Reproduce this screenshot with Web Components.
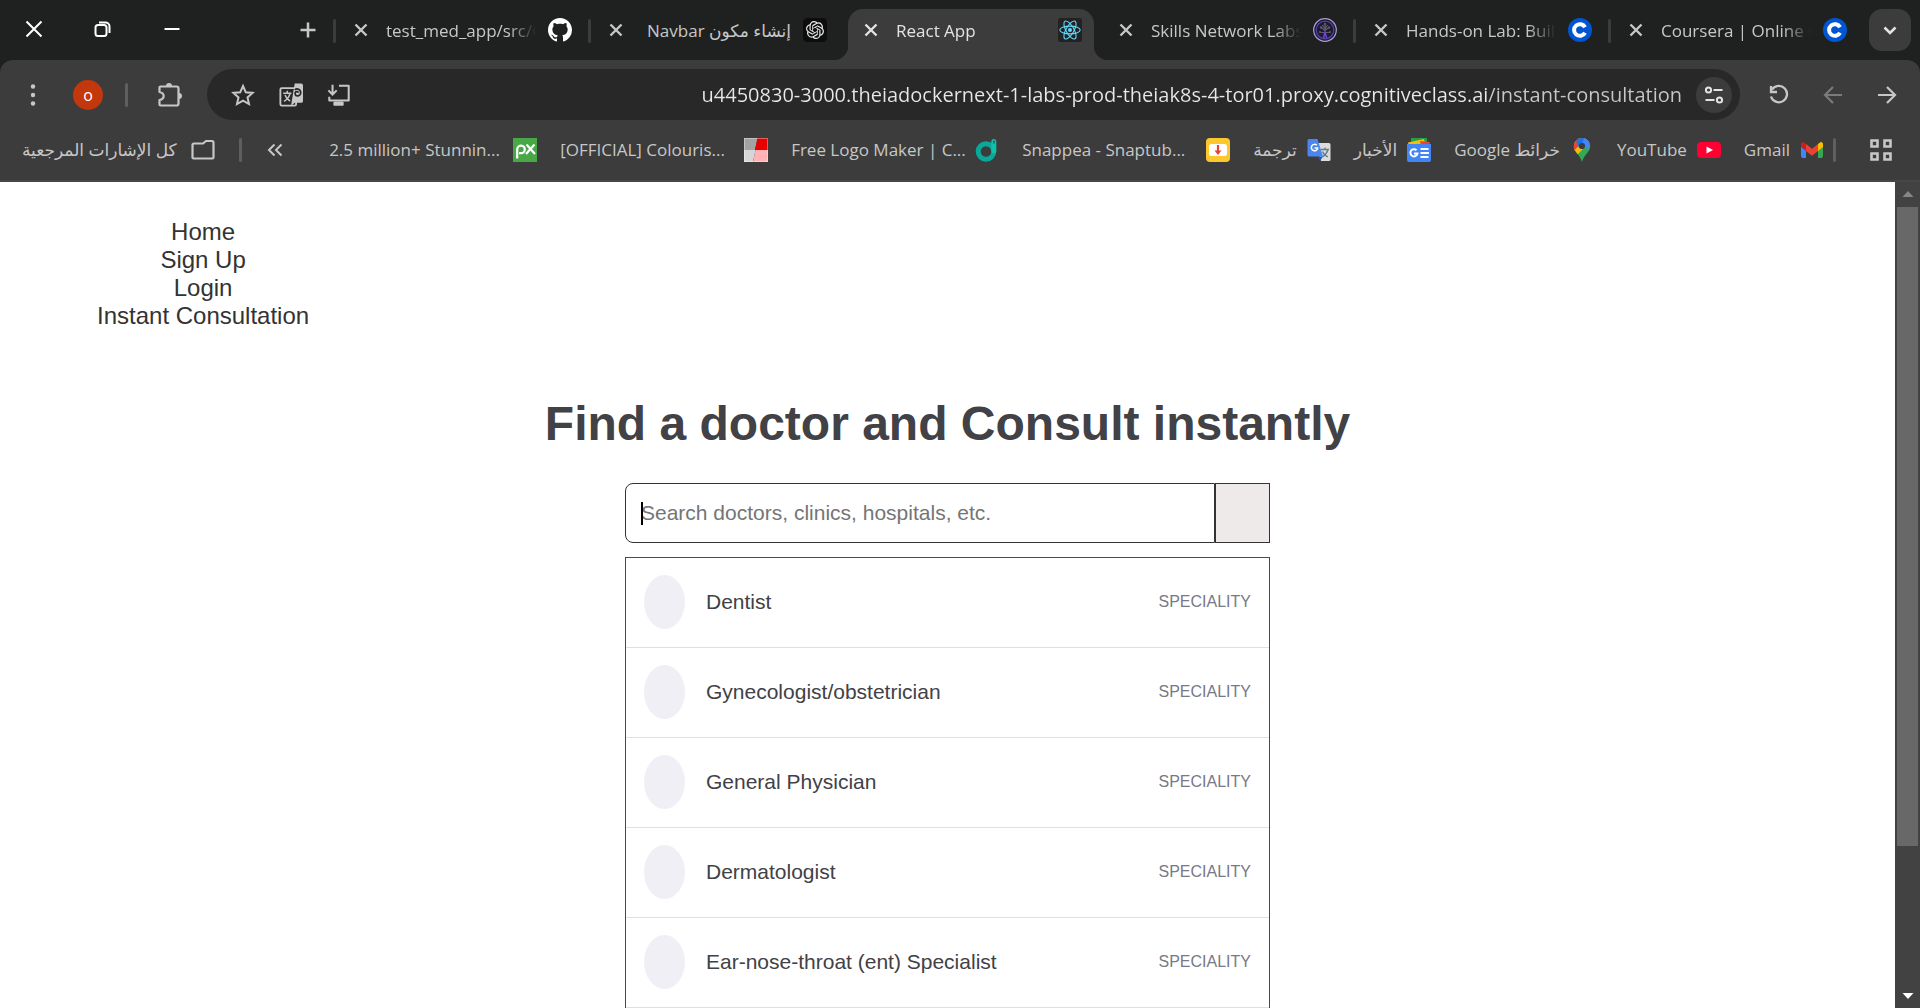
<!DOCTYPE html>
<html lang="en">
<head>
<meta charset="utf-8">
<title>React App</title>
<style>
  html, body { margin: 0; height: 100%; overflow: hidden; background: #fff; }
  body { font-family: "Liberation Sans", Arial, sans-serif; }
</style>
</head>
<body>
<browser-window></browser-window>

<script>
const UI_FONT = '"Open Sans", "Noto Sans", "DejaVu Sans", sans-serif';

const ICONS = {
  close: ['0 0 24 24', '<path d="M4.5 4.5l15 15M19.5 4.5l-15 15" stroke="#fff" stroke-width="2" fill="none"/>'],
  restore: ['0 0 24 24', '<rect x="4.5" y="8" width="11" height="11" rx="2.5" stroke="#fff" stroke-width="2" fill="none"/><path d="M8 5.500h6.500a4 4 0 0 1 4 4V16" stroke="#fff" stroke-width="2" fill="none"/>'],
  minimize: ['0 0 24 24', '<path d="M4.500 12h15" stroke="#fff" stroke-width="2"/>'],
  plus: ['0 0 24 24', '<path d="M4.500 12h15M12 4.500v15" stroke="#c7c7c7" stroke-width="2.5"/>'],
  tabclose: ['0 0 24 24', '<path d="M6.500 6.500l11 11M17.500 6.500l-11 11" stroke="currentColor" stroke-width="2.4"/>'],
  chevron: ['0 0 24 24', '<path d="M6.500 9.500l5.500 5.500 5.500-5.500" stroke="#e3e3e3" stroke-width="2.6" fill="none"/>'],
  github: ['0 0 16 16', '<path fill="#fff" d="M8 0C3.580 0 0 3.580 0 8c0 3.540 2.290 6.530 5.470 7.590.4.070.55-.17.55-.38 0-.19-.01-.82-.01-1.490-2.010.37-2.530-.49-2.690-.94-.09-.23-.48-.94-.82-1.130-.28-.15-.68-.52-.01-.53.63-.01 1.080.58 1.230.82.72 1.210 1.870.87 2.330.66.07-.52.28-.87.51-1.070-1.780-.2-3.640-.89-3.640-3.950 0-.87.31-1.590.82-2.150-.08-.2-.36-1.020.08-2.120 0 0 .67-.21 2.200.82.64-.18 1.320-.27 2-.27s1.360.09 2 .27c1.530-1.040 2.200-.82 2.200-.82.44 1.100.16 1.920.08 2.120.51.56.82 1.270.82 2.150 0 3.070-1.870 3.750-3.650 3.950.29.25.54.73.54 1.480 0 1.070-.01 1.930-.01 2.200 0 .21.15.46.55.38A8.010 8.010 0 0 0 16 8c0-4.420-3.580-8-8-8z"/>'],
  openai: ['0 0 24 24', '<rect width="24" height="24" rx="4.5" fill="#0d0d0d"/><g transform="translate(3 3) scale(.75)"><path fill="#e8e8e8" d="M22.2819 9.8211a5.9847 5.9847 0 0 0-.5157-4.9108 6.0462 6.0462 0 0 0-6.5098-2.9A6.0651 6.0651 0 0 0 4.9807 4.1818a5.9847 5.9847 0 0 0-3.9977 2.9 6.0462 6.0462 0 0 0 .7427 7.0966 5.98 5.98 0 0 0 .511 4.9107 6.051 6.051 0 0 0 6.5146 2.9001A5.9847 5.9847 0 0 0 13.2599 24a6.0557 6.0557 0 0 0 5.7718-4.2058 5.9894 5.9894 0 0 0 3.9977-2.9001 6.0557 6.0557 0 0 0-.7475-7.0729zm-9.022 12.6081a4.4755 4.4755 0 0 1-2.8764-1.0408l.1419-.0804 4.7783-2.7582a.7948.7948 0 0 0 .3927-.6813v-6.7369l2.02 1.1686a.071.071 0 0 1 .038.052v5.5826a4.504 4.504 0 0 1-4.4945 4.4944zm-9.6607-4.1254a4.4708 4.4708 0 0 1-.5346-3.0137l.142.0852 4.783 2.7582a.7712.7712 0 0 0 .7806 0l5.8428-3.3685v2.3324a.0804.0804 0 0 1-.0332.0615L9.74 19.9502a4.4992 4.4992 0 0 1-6.1408-1.6464zM2.3408 7.8956a4.485 4.485 0 0 1 2.3655-1.9728V11.6a.7664.7664 0 0 0 .3879.6765l5.8144 3.3543-2.0201 1.1685a.0757.0757 0 0 1-.071 0l-4.8303-2.7865A4.504 4.504 0 0 1 2.3408 7.872zm16.5963 3.8558L13.1038 8.364 15.1192 7.2a.0757.0757 0 0 1 .071 0l4.8303 2.7913a4.4944 4.4944 0 0 1-.6765 8.1042v-5.6772a.79.79 0 0 0-.407-.667zm2.0107-3.0231l-.142-.0852-4.7735-2.7818a.7759.7759 0 0 0-.7854 0L9.409 9.2297V6.8974a.0662.0662 0 0 1 .0284-.0615l4.8303-2.7866a4.4992 4.4992 0 0 1 6.6802 4.66zM8.3065 12.863l-2.02-1.1638a.0804.0804 0 0 1-.038-.0567V6.0742a4.4992 4.4992 0 0 1 7.3757-3.4537l-.142.0805L8.704 5.459a.7948.7948 0 0 0-.3927.6813zm1.0976-2.3654l2.602-1.4998 2.6069 1.4998v2.9994l-2.5974 1.4997-2.6067-1.4997Z"/></g>'],
  react: ['0 0 24 24', '<rect width="24" height="24" rx="2.5" fill="#222"/><g fill="none" stroke="#61dafb" stroke-width="1.1"><ellipse cx="12" cy="12" rx="10.2" ry="3.9"/><ellipse cx="12" cy="12" rx="10.2" ry="3.9" transform="rotate(60 12 12)"/><ellipse cx="12" cy="12" rx="10.2" ry="3.9" transform="rotate(120 12 12)"/></g><circle cx="12" cy="12" r="2" fill="#61dafb"/>'],
  skills: ['0 0 24 24', '<circle cx="12" cy="12" r="11.3" fill="#1d1b2c" stroke="#a99fd6" stroke-width="1.2"/><circle cx="12" cy="12" r="8.8" fill="none" stroke="#5b3fb0" stroke-width="1.2"/><g stroke="#5d5a70" stroke-width="1.2" fill="none"><path d="M12 6v9M12 12.500l-4-3M12 12.500l4-3M12 14.500l-5 0M12 14.500l5 0M9.500 7l2.500 4 2.500-4"/></g><path d="M10.500 20l1.500-6 1.500 6" stroke="#6d46d0" stroke-width="1.5" fill="none"/><g fill="#5d5a70"><circle cx="8" cy="9.5" r="1.2"/><circle cx="16" cy="9.5" r="1.2"/><circle cx="12" cy="6" r="1.2"/><circle cx="7" cy="14" r="1.1"/><circle cx="17" cy="14" r="1.1"/></g>'],
  coursera: ['0 0 24 24', '<circle cx="12" cy="12" r="12" fill="#0056d2"/><path d="M17 9.300A5.800 5.800 0 1 0 17 14.700" fill="none" stroke="#fff" stroke-width="4"/>'],
  kebab: ['0 0 24 24', '<g fill="#c7c7c7"><circle cx="12" cy="3.5" r="2.2"/><circle cx="12" cy="12" r="2.2"/><circle cx="12" cy="20.5" r="2.2"/></g>'],
  puzzle: ['0 0 24 24', '<path d="M2.500 3.500h16a2 2 0 0 1 2 2v15a2 2 0 0 1-2 2h-16a1 1 0 0 1-1-1v-4.500c5.500-1 5.500-7 0-8V4.500a1 1 0 0 1 1-1z" fill="none" stroke="#c7c7c7" stroke-width="2.2" stroke-linejoin="round"/><path d="M8 3a3 3 0 0 1 6 0zM21 10a3 3 0 0 1 0 6z" fill="#c7c7c7"/>'],
  star: ['0 0 24 24', '<path d="M12 3l2.800 6.300 6.800.6-5.100 4.500 1.500 6.700-6-3.500-6 3.500 1.500-6.700-5.100-4.500 6.800-.6z" fill="none" stroke="#c7c7c7" stroke-width="2"/>'],
  translate: ['0 0 26 26', '<rect x="1.5" y="5.5" width="17" height="19" rx="1.5" fill="none" stroke="#c7c7c7" stroke-width="2"/><path d="M4.500 11h9M9 8.500V11M12 11c-.8 4-3.500 7-6.500 9M6.500 13c1 3 3 5 5.500 6.500" fill="none" stroke="#c7c7c7" stroke-width="1.6"/><path d="M17 .5h7a2 2 0 0 1 2 2v17a2 2 0 0 1-2 2h-7L13 25z" fill="#c7c7c7"/><path d="M17 7.500C20 5 24 7.500 23.500 11S18 15 17.500 12s3-3.500 3.500-1.500" fill="none" stroke="#282828" stroke-width="1.8"/>'],
  install: ['0 0 26 26', '<path d="M13 3h10.500v16H2.500v-4M8 21.500h9v2H8z" fill="none" stroke="#c7c7c7" stroke-width="2.2" stroke-linejoin="round"/><path d="M6 2v10M1.500 8L6 12.500 10.500 8" fill="none" stroke="#c7c7c7" stroke-width="2.2"/>'],
  tune: ['0 0 24 24', '<g fill="none" stroke="#e3e3e3" stroke-width="2"><circle cx="6.5" cy="7" r="2.6"/><path d="M11.500 7h9M3.500 17h9"/><circle cx="17.5" cy="17" r="2.6"/></g>'],
  reload: ['0 0 24 24', '<path d="M5 6.500A8.200 8.200 0 1 1 4 13.500M4 3v6h6" fill="none" stroke="#c7c7c7" stroke-width="2.3"/>'],
  back: ['0 0 24 24', '<path d="M21 12H4.500M12 4l-8 8 8 8" fill="none" stroke="#7b7b7b" stroke-width="2.2"/>'],
  forward: ['0 0 24 24', '<path d="M3 12h16.500M12 4l8 8-8 8" fill="none" stroke="#c7c7c7" stroke-width="2.2"/>'],
  folder: ['0 0 24 24', '<path d="M1.500 19.500V7a1.500 1.500 0 0 1 1.500-1.500h9l3-2.500h6a1.500 1.500 0 0 1 1.500 1.500v15a1 1 0 0 1-1 1h-19a1 1 0 0 1-1-1z" fill="none" stroke="#c7c7c7" stroke-width="2.2" stroke-linejoin="round"/>'],
  more: ['0 0 24 24', '<path d="M11.500 6.500L6 12l5.500 5.500M18.500 6.500L13 12l5.500 5.500" fill="none" stroke="#c7c7c7" stroke-width="2"/>'],
  px: ['0 0 24 24', '<rect width="24" height="24" fill="#48a847"/><path d="M4.200 20.500V11a3.800 3.800 0 1 1 3.800 4.200H6M13.500 6.500l8.500 9.500M21.500 6.500l-8.500 9.500" fill="none" stroke="#fff" stroke-width="2.2"/>'],
  colour: ['0 0 24 24', '<path d="M0 0h13.500L11 12H0z" fill="#a3a3a3"/><path d="M13.500 0H24v12H11z" fill="#e60000"/><path d="M0 12h11.500L9 24H0z" fill="#d6d6d6"/><path d="M11.500 12H24v12H9z" fill="#ffb3b5"/><rect x=".5" y=".5" width="23" height="23" fill="none" stroke="#fff" stroke-opacity=".35"/>'],
  logomaker: ['0 0 24 24', '<circle cx="11" cy="13.5" r="7.8" fill="none" stroke="#0aa89a" stroke-width="5"/><path d="M18.800 13V3.500" stroke="#12bfa8" stroke-width="5" stroke-linecap="round"/><path d="M19 2.500v3" stroke="#2b5f5a" stroke-width="1.5"/>'],
  snappea: ['0 0 24 24', '<rect width="24" height="24" rx="4" fill="#fdc82f"/><rect x="3" y="6" width="18" height="12" rx="2.5" fill="#fff"/><path d="M12 7v7" stroke="#ea4335" stroke-width="2.2"/><path d="M8.500 12.500h7L12 17z" fill="#ea4335"/>'],
  gtranslate: ['0 0 24 24', '<path d="M9 5h13a1.500 1.500 0 0 1 1.500 1.500v15A1.500 1.500 0 0 1 22 23H14z" fill="#dcdcdc"/><path d="M14 11.500h8M18 9.500v2M21 11.500c-1 4-3.500 6-5.500 7.500M15.500 13.500c1 2.500 3 4.500 5.500 5.500" stroke="#607d8b" stroke-width="1.3" fill="none"/><path d="M11 18.500h5L13 23z" fill="#1f57c3"/><path d="M2 1h8.500l5.500 17.500H2A1.500 1.500 0 0 1 .5 17V2.500A1.500 1.500 0 0 1 2 1z" fill="#4a86ee"/><path d="M9.800 7.300a3.200 3.200 0 1 0 .9 2.700H7.500" stroke="#fff" stroke-width="1.5" fill="none"/>'],
  gnews: ['0 0 24 24', '<path d="M4 0h16v8H4z" fill="#24a148"/><path d="M1 4.500L17 1l2 8H2z" fill="#fbbc04"/><path d="M13 3l10 1-1 4h-8z" fill="#ea4335"/><path d="M0 6h24v16a2 2 0 0 1-2 2H2a2 2 0 0 1-2-2z" fill="#4285f4"/><path d="M9.500 12.200a3.600 3.600 0 1 0 1 3.300H7" stroke="#fff" stroke-width="2" fill="none"/><path d="M13.500 11h8M13.500 15h8.500M13.500 19h8" stroke="#fff" stroke-width="2"/>'],
  gmaps: ['0 0 24 24', '<clipPath id="pin"><path d="M12 0a8.200 8.200 0 0 1 8.200 8.200c0 6-6.200 8-8.200 15.800C10 16.200 3.800 14.200 3.800 8.200A8.200 8.200 0 0 1 12 0z"/></clipPath><g clip-path="url(#pin)"><path d="M0 0h24v24H0z" fill="#34a853"/><path d="M0 0h24L4 20H0z" fill="#fbbc04"/><path d="M0 0h16L3 14z" fill="#ea4335"/><path d="M6 2l5-4h10L9 10z" fill="#1a73e8"/><path d="M14 0h10v6l-8 5-4-4z" fill="#4285f4"/></g><circle cx="12" cy="8" r="3.1" fill="#3c3c3c"/>'],
  youtube: ['0 0 24 24', '<rect y="4" width="24" height="16" rx="4" fill="#ff0033"/><path d="M9.500 8.500l6.500 3.500-6.500 3.500z" fill="#fff"/>'],
  gmail: ['0 0 24 24', '<path d="M1 6h5v14H3a2 2 0 0 1-2-2z" fill="#4285f4"/><path d="M18 6h5v12a2 2 0 0 1-2 2h-3z" fill="#34a853"/><path d="M18 6l2-1.500c1.500-1 3 0 3 2V9l-5 4z" fill="#fbbc04"/><path d="M6 6L4 4.500C2.500 3.500 1 4.500 1 6.500V9l5 4z" fill="#c5221f"/><path d="M6 6l6 4.800L18 6v7l-6 4.700L6 13z" fill="#ea4335"/>'],
  apps: ['0 0 24 24', '<path d="M2.500 2.500h6v6h-6zM15.500 2.500h6v6h-6zM2.500 15.500h6v6h-6zM15.500 15.500h6v6h-6z" fill="none" stroke="#c7c7c7" stroke-width="2.6"/>'],
  up: ['0 0 24 24', '<path d="M6.500 15L12 9l5.500 6z" fill="#868686"/>'],
  down: ['0 0 24 24', '<path d="M6.500 9L12 15l5.500-6z" fill="#fff"/>']
};

const RESET = `
  *, *::before, *::after { box-sizing: border-box; }
  button { margin: 0; padding: 0; border: 0; background: none; font: inherit; color: inherit; display: flex; align-items: center; justify-content: center; flex: none; }
  a { color: inherit; text-decoration: none; }
`;

function define(name, markup, setup) {
  const template = document.createElement('template');
  template.innerHTML = markup;
  customElements.define(name, class extends HTMLElement {
    constructor() {
      super();
      this.attachShadow({ mode: 'open' }).append(template.content.cloneNode(true));
    }
    connectedCallback() {
      if (setup) setup(this, this.shadowRoot);
    }
  });
}

define('ui-icon', `
  <style>
    :host { display: block; flex: none; width: 24px; height: 24px; }
    svg { display: block; width: 100%; height: 100%; }
  </style>
  <svg aria-hidden="true"></svg>`, (host, root) => {
  const [box, body] = ICONS[host.getAttribute('name')];
  const svg = root.querySelector('svg');
  svg.setAttribute('viewBox', box);
  svg.innerHTML = body;
});

define('bar-divider', `
  <style>:host { display: block; flex: none; width: 3px; height: 24px; border-radius: 2px; background: var(--divider, #5f5f5f); }</style>`);

define('browser-tab', `
  <style>${RESET}
    :host { display: flex; flex: 1 1 0; min-width: 0; height: 60px; padding-top: 9px; --divider: transparent; color: #c7c7c7; }
    :host([divided]) { --divider: #3c3c3c; }
    :host([active]) { color: #e3e3e3; }
    bar-divider { margin-top: 10px; margin-right: 2px; }
    .tab { position: relative; flex: 1; min-width: 0; display: flex; align-items: flex-start; padding: 9px 12px 0 11px; margin-right: 4px; border-radius: 15px 15px 0 0; }
    :host([active]) .tab { background: #3c3c3c; }
    :host([active]) .tab::before, :host([active]) .tab::after { content: ""; position: absolute; bottom: 0; width: 15px; height: 15px; }
    :host([active]) .tab::before { right: 100%; background: radial-gradient(circle at 0 0, transparent 15px, #3c3c3c 16px); }
    :host([active]) .tab::after { left: 100%; background: radial-gradient(circle at 100% 0, transparent 15px, #3c3c3c 16px); }
    a { flex: 1; min-width: 0; display: flex; align-items: center; gap: 12px; margin-left: 13px; height: 24px; }
    .title { flex: 1; min-width: 0; overflow: hidden; white-space: nowrap; font-size: 17px; line-height: 26px; padding-top: 2px;
      -webkit-mask-image: linear-gradient(to left, transparent, #000 28px); mask-image: linear-gradient(to left, transparent, #000 28px); }
    :host([dir=rtl]) .title { -webkit-mask-image: none; mask-image: none; direction: rtl; }
    :host([dir=rtl]) { direction: ltr; }
  </style>
  <bar-divider></bar-divider>
  <div class="tab">
    <button aria-label="Close tab"><ui-icon name="tabclose"></ui-icon></button>
    <a href="#"><span class="title"><slot></slot></span><slot name="icon"></slot></a>
  </div>`);

define('tab-strip', `
  <style>${RESET}
    :host { display: flex; height: 60px; background: #1f2120; font-family: ${UI_FONT}; }
    .controls { display: flex; gap: 1px; width: 333px; flex: none; height: 58px; }
    .controls button { width: 68px; }
    .controls .new { width: 42px; margin-left: auto; margin-right: 4px; padding-top: 2px; }
    .tabs { display: flex; flex: 1; min-width: 0; }
    .search { width: 42px; height: 42px; margin: 9px 9px 0 6px; border-radius: 13px; background: #3c3c3c; }
  </style>
  <div class="controls">
    <button aria-label="Close"><ui-icon name="close"></ui-icon></button>
    <button aria-label="Restore"><ui-icon name="restore"></ui-icon></button>
    <button aria-label="Minimize"><ui-icon name="minimize"></ui-icon></button>
    <button class="new" aria-label="New tab"><ui-icon name="plus"></ui-icon></button>
  </div>
  <nav class="tabs">
    <browser-tab divided>test_med_app/src/Components<ui-icon slot="icon" name="github"></ui-icon></browser-tab>
    <browser-tab divided dir="rtl">إنشاء مكون Navbar<ui-icon slot="icon" name="openai"></ui-icon></browser-tab>
    <browser-tab active>React App<ui-icon slot="icon" name="react"></ui-icon></browser-tab>
    <browser-tab>Skills Network Labs<ui-icon slot="icon" name="skills"></ui-icon></browser-tab>
    <browser-tab divided>Hands-on Lab: Build<ui-icon slot="icon" name="coursera"></ui-icon></browser-tab>
    <browser-tab divided>Coursera | Online Courses<ui-icon slot="icon" name="coursera"></ui-icon></browser-tab>
  </nav>
  <button class="search" aria-label="Search tabs"><ui-icon name="chevron"></ui-icon></button>`);

define('address-bar', `
  <style>${RESET}
    :host { flex: 1; min-width: 0; display: flex; align-items: center; height: 51px; padding: 0 8px 0 24px; gap: 24px; border-radius: 26px; background: #282828; }
    label { flex: 1; min-width: 0; display: flex; }
    input { flex: 1; min-width: 0; border: 0; padding: 0; outline: 0; height: 32px; text-align: right; font: 20px/32px ${UI_FONT};
      color: transparent; background: linear-gradient(to left, #c7c7c7 193px, #e8e8e8 193px); -webkit-background-clip: text; background-clip: text; }
    .site { width: 36px; height: 36px; border-radius: 50%; background: #3c3c3c; margin-left: -10px; }
  </style>
  <button aria-label="Bookmark this page"><ui-icon name="star"></ui-icon></button>
  <button aria-label="Translate this page"><ui-icon name="translate"></ui-icon></button>
  <button aria-label="Install app"><ui-icon name="install"></ui-icon></button>
  <label aria-label="Address"><input type="text" aria-label="Address" value="u4450830-3000.theiadockernext-1-labs-prod-theiak8s-4-tor01.proxy.cognitiveclass.ai/instant-consultation"></label>
  <button class="site" aria-label="Site information"><ui-icon name="tune"></ui-icon></button>`);

define('tool-bar', `
  <style>${RESET}
    :host { display: flex; align-items: center; height: 69px; padding: 0 21px; background: #3c3c3c; border-radius: 13px 13px 0 0; font-family: ${UI_FONT}; }
    .profile { width: 30px; height: 30px; border-radius: 50%; background: #c2370c; color: #fff; font-size: 16px; line-height: 30px; margin: 0 22px 0 28px; }
    .puzzle { margin: 0 25px 0 30px; }
    .nav { display: flex; gap: 30px; margin-left: 27px; }
  </style>
  <button aria-label="Menu"><ui-icon name="kebab"></ui-icon></button>
  <button class="profile">o</button>
  <bar-divider></bar-divider>
  <button class="puzzle" aria-label="Extensions"><ui-icon name="puzzle"></ui-icon></button>
  <address-bar></address-bar>
  <div class="nav">
    <button aria-label="Reload"><ui-icon name="reload"></ui-icon></button>
    <button aria-label="Back" disabled><ui-icon name="back"></ui-icon></button>
    <button aria-label="Forward"><ui-icon name="forward"></ui-icon></button>
  </div>`);

define('bookmark-link', `
  <style>${RESET}
    :host { display: block; flex: none; }
    a { display: flex; align-items: center; gap: var(--gap, 10px); height: 24px; }
    span { white-space: nowrap; }
    :host([long]) span { width: 174px; }
    :host([dir=rtl]) a { direction: ltr; }
    :host([dir=rtl]) span { direction: rtl; }
  </style>
  <a href="#"><span><slot></slot></span><slot name="icon"></slot></a>`);

define('bookmarks-bar', `
  <style>${RESET}
    :host { display: flex; align-items: center; height: 53px; padding: 0 27px 10px 22px; background: #3c3c3c; border-bottom: 2px solid #474747; color: #c7c7c7; font: 17px/24px ${UI_FONT}; }
    .more { margin: 0 auto 0 21px; }
    .all { margin-right: 24px; --gap: 14px; }
    .list { display: flex; gap: 23px; }
    .end { margin: 0 33px 0 9px; }
  </style>
  <bookmark-link class="all" dir="rtl">كل الإشارات المرجعية<ui-icon slot="icon" name="folder"></ui-icon></bookmark-link>
  <bar-divider></bar-divider>
  <button class="more" aria-label="More bookmarks"><ui-icon name="more"></ui-icon></button>
  <nav class="list">
    <bookmark-link long>2.5 million+ Stunnin...<ui-icon slot="icon" name="px"></ui-icon></bookmark-link>
    <bookmark-link long>[OFFICIAL] Colouris...<ui-icon slot="icon" name="colour"></ui-icon></bookmark-link>
    <bookmark-link long>Free Logo Maker | C...<ui-icon slot="icon" name="logomaker"></ui-icon></bookmark-link>
    <bookmark-link long>Snappea - Snaptub...<ui-icon slot="icon" name="snappea"></ui-icon></bookmark-link>
    <bookmark-link dir="rtl">ترجمة<ui-icon slot="icon" name="gtranslate"></ui-icon></bookmark-link>
    <bookmark-link dir="rtl">الأخبار<ui-icon slot="icon" name="gnews"></ui-icon></bookmark-link>
    <bookmark-link dir="rtl">خرائط Google<ui-icon slot="icon" name="gmaps"></ui-icon></bookmark-link>
    <bookmark-link>YouTube<ui-icon slot="icon" name="youtube"></ui-icon></bookmark-link>
    <bookmark-link>Gmail<ui-icon slot="icon" name="gmail"></ui-icon></bookmark-link>
  </nav>
  <bar-divider class="end"></bar-divider>
  <button aria-label="Apps"><ui-icon name="apps"></ui-icon></button>`);

define('site-nav', `
  <style>${RESET}
    :host { display: block; padding: 36px 97px 0; }
    ul { list-style: none; margin: 0; padding: 0; width: max-content; text-align: center; color: #333; font-size: 24px; line-height: 28px; }
  </style>
  <nav><ul>
    <li><a href="#">Home</a></li>
    <li><a href="#">Sign Up</a></li>
    <li><a href="#">Login</a></li>
    <li><a href="#">Instant Consultation</a></li>
  </ul></nav>`);

define('speciality-row', `
  <style>${RESET}
    :host { display: flex; align-items: center; height: 90px; padding: 0 18px 1px; border-bottom: 1px solid #dfe0e1; box-sizing: border-box; }
    i { flex: none; width: 41px; height: 54px; border-radius: 50%; background: #f0eff5; margin-right: 21px; }
    .name { flex: 1; font-size: 21px; color: #414146; }
    .kind { font-size: 16px; color: #787887; }
  </style>
  <i></i><span class="name"><slot></slot></span><span class="kind">SPECIALITY</span>`);

define('doctor-search', `
  <style>${RESET}
    :host { display: flex; flex-direction: column; align-items: center; padding-top: 66px; }
    h1 { margin: 0; font-size: 48px; line-height: 56px; font-weight: 700; color: #414146; text-align: center; }
    .panel { width: 645px; max-width: 100%; }
    form { display: flex; height: 60px; margin: 31px 0 14px; }
    label { position: relative; flex: 1; display: flex; }
    .caret { position: absolute; left: 16px; top: 19px; width: 2px; height: 23px; background: #000; }
    input { flex: 1; min-width: 0; border: 1px solid #333; border-radius: 8px 0 0 8px; padding: 0 15px; outline: 0; background: #fff; font: 21px "Liberation Sans", Arial, sans-serif; color: #333; }
    input::placeholder { color: #757575; opacity: 1; }
    form button { width: 55px; border: 1px solid #333; background: #eeeae9; }
    .list { border: 1px solid #4a4a4e; }
  </style>
  <h1>Find a doctor and Consult instantly</h1>
  <div class="panel">
    <form>
      <label><input type="text" aria-label="Search doctors" placeholder="Search doctors, clinics, hospitals, etc."><span class="caret"></span></label>
      <button type="button" aria-label="Search"></button>
    </form>
    <div class="list">
      <speciality-row>Dentist</speciality-row>
      <speciality-row>Gynecologist/obstetrician</speciality-row>
      <speciality-row>General Physician</speciality-row>
      <speciality-row>Dermatologist</speciality-row>
      <speciality-row>Ear-nose-throat (ent) Specialist</speciality-row>
    </div>
  </div>`);

define('scroll-rail', `
  <style>${RESET}
    :host { display: flex; flex-direction: column; align-items: center; flex: none; width: 25px; background: #424242; }
    .track { flex: 1; align-self: stretch; display: flex; flex-direction: column; padding: 1px 2px 0; }
    .thumb { flex: 639; background: #686868; }
    .rest { flex: 138; }
  </style>
  <button aria-label="Scroll up"><ui-icon name="up"></ui-icon></button>
  <div class="track"><div class="thumb"></div><div class="rest"></div></div>
  <button aria-label="Scroll down"><ui-icon name="down"></ui-icon></button>`);

define('browser-window', `
  <style>${RESET}
    :host { display: flex; flex-direction: column; height: 100vh; background: #1f2120; overflow: hidden; }
    tab-strip, tool-bar, bookmarks-bar { flex: none; }
    .view { flex: 1; min-height: 0; display: flex; background: #fff; }
    main { flex: 1; min-width: 0; overflow: hidden; }
  </style>
  <tab-strip></tab-strip>
  <tool-bar></tool-bar>
  <bookmarks-bar></bookmarks-bar>
  <div class="view">
    <main><site-nav></site-nav><doctor-search></doctor-search></main>
    <scroll-rail></scroll-rail>
  </div>`);
</script>
</body>
</html>
